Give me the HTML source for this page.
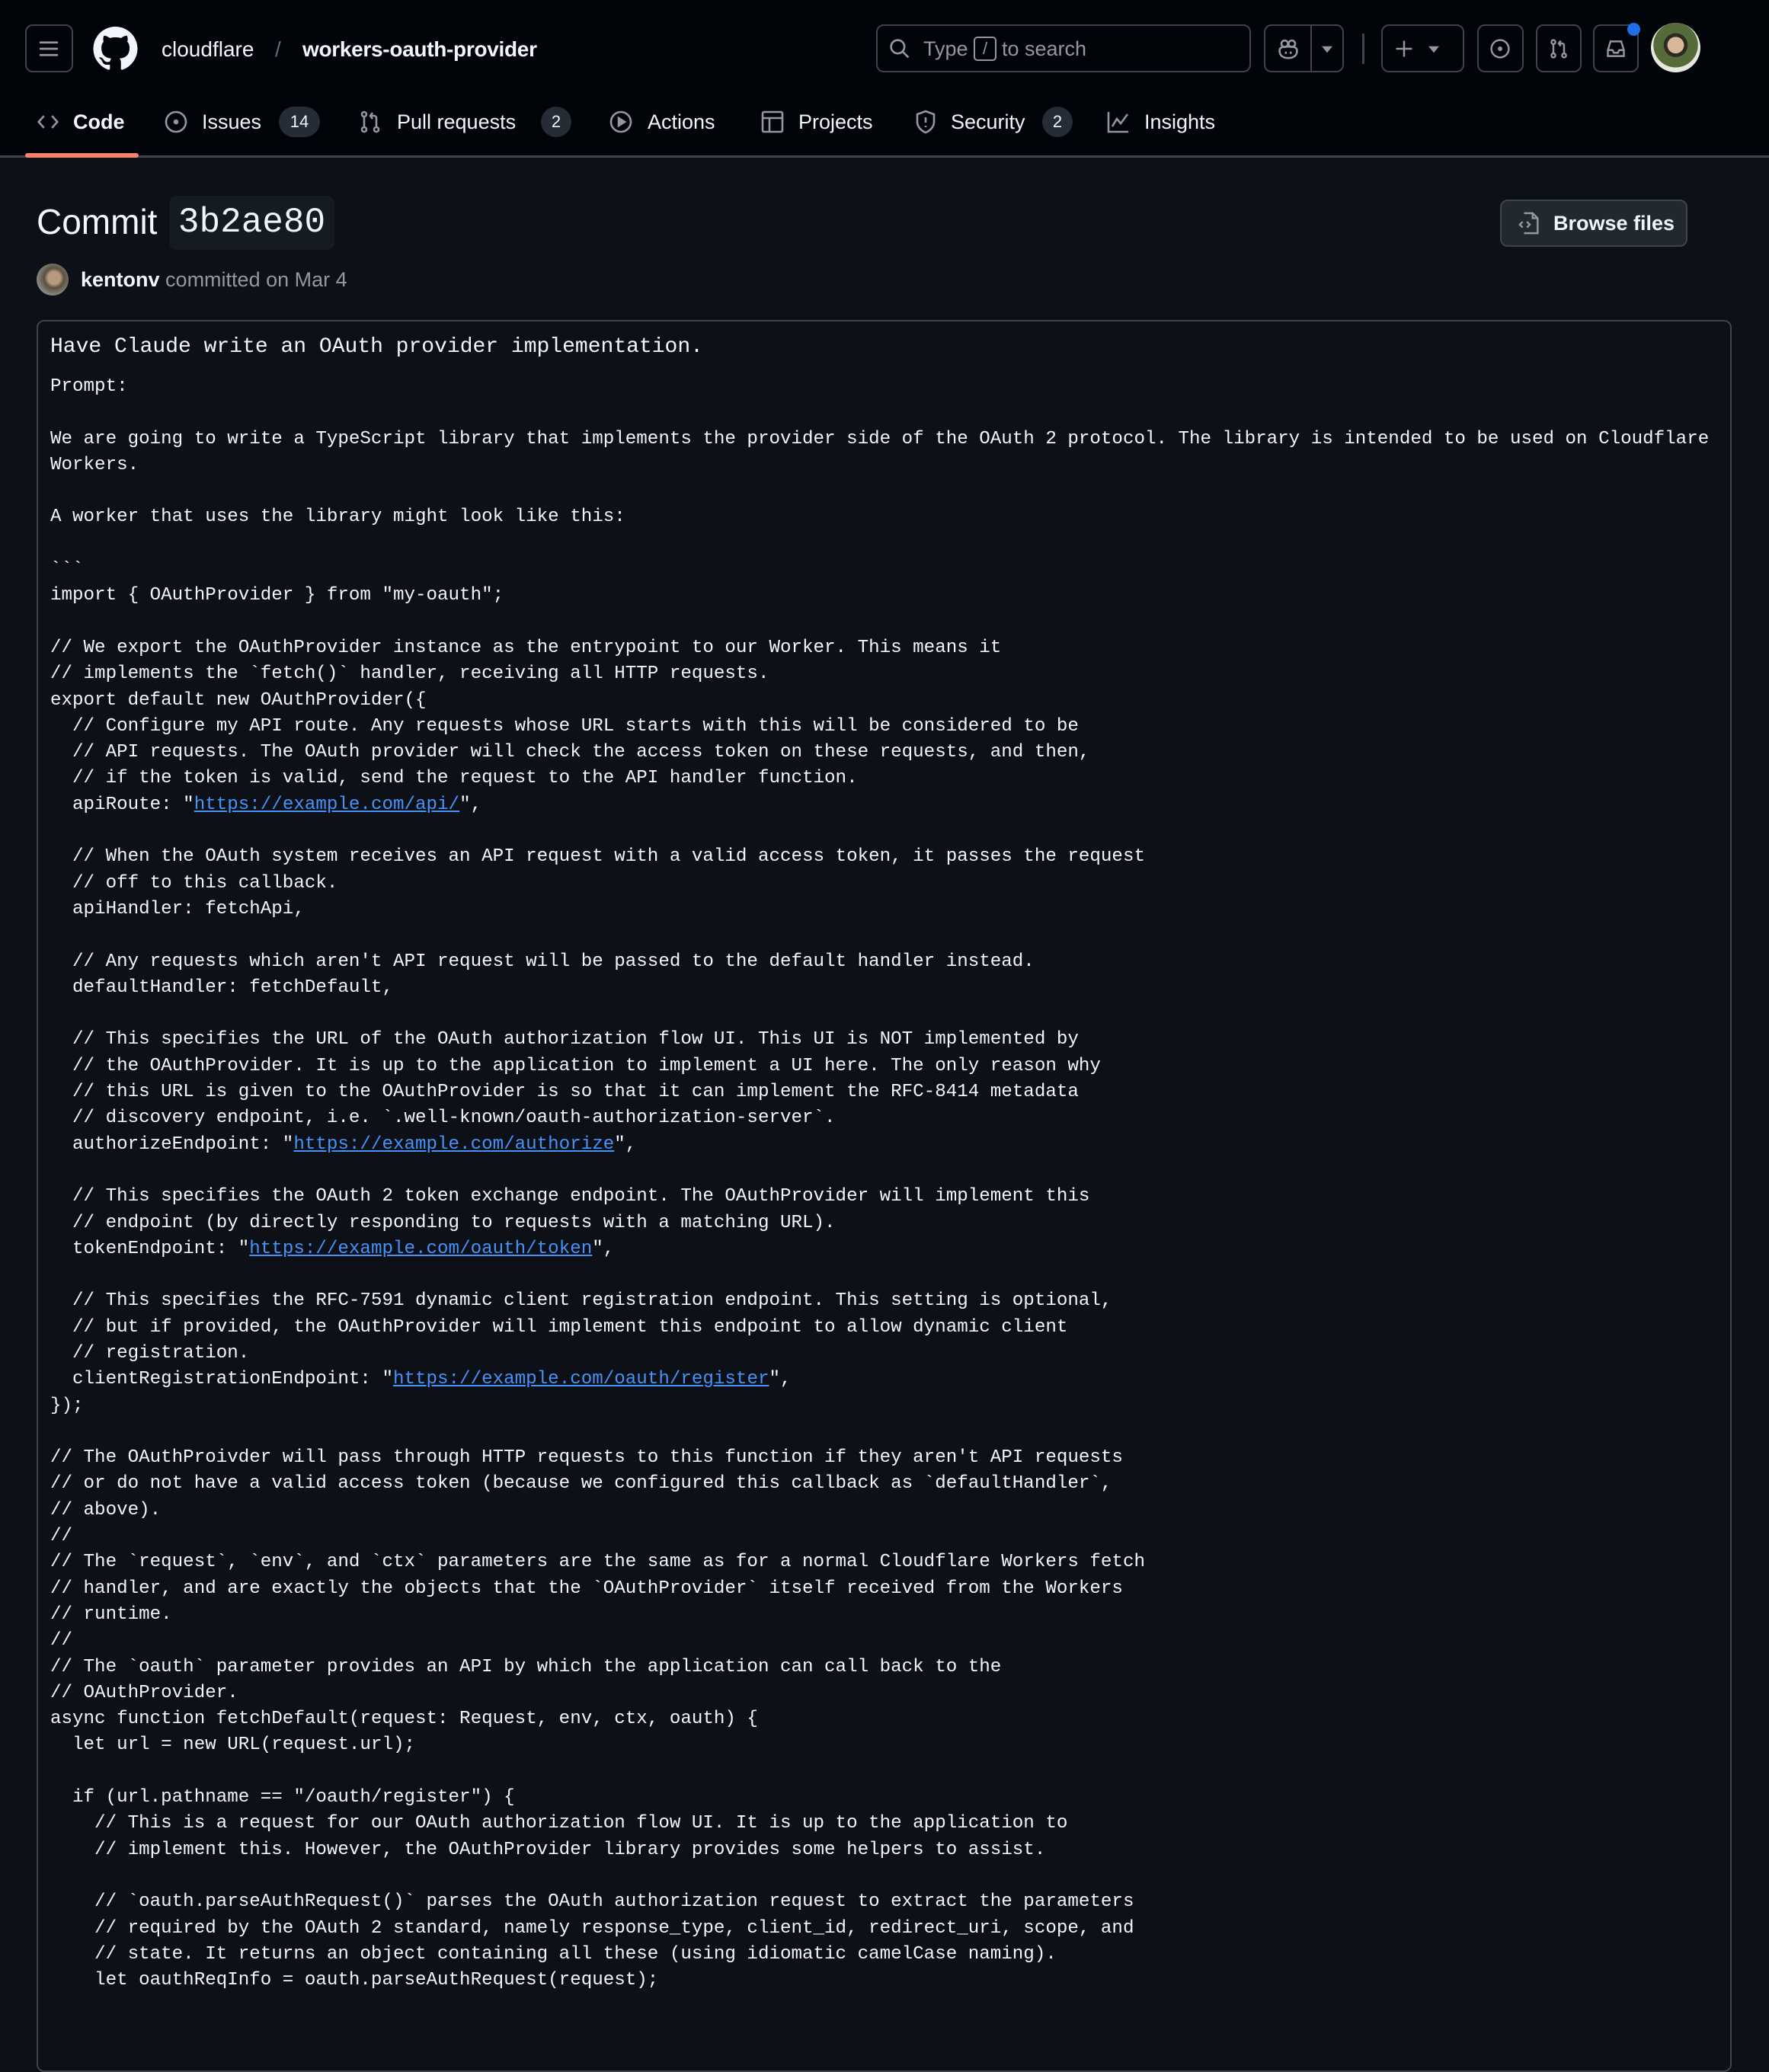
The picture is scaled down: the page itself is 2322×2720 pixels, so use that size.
<!DOCTYPE html>
<html><head><meta charset="utf-8"><style>
*{box-sizing:border-box;margin:0;padding:0}
body{width:2322px;height:2656px;overflow:hidden;background:#0d1117;color:#f0f6fc;font-family:"Liberation Sans",sans-serif;position:relative}
.hdr{position:absolute;left:0;top:0;width:2322px;height:207px;background:#010409;border-bottom:3px solid #3d444d}
.a{position:absolute}
.btn{position:absolute;top:32px;height:63px;border:2px solid #3d444d;border-radius:10px}
.t{position:absolute;font-size:27px;line-height:40px;top:140px;color:#f0f6fc}
.cnt{position:absolute;top:140px;height:40px;border-radius:20px;background:#262c36;color:#f0f6fc;font-size:22px;line-height:40px;text-align:center}
svg.i{position:absolute}
pre{font-family:"Liberation Mono",monospace;font-size:24.2px;line-height:34.3px;color:#f0f6fc;white-space:pre}
a{color:#4493f8;text-decoration:underline}
</style></head><body>
<div class="hdr">
 <div class="btn" style="left:33px;width:63px"></div>
 <svg class="i" style="left:50px;top:50px" width="28" height="28" viewBox="0 0 16 16" fill="#9198a1"><rect x="1" y="2.5" width="14" height="1.6" rx=".8"/><rect x="1" y="7.2" width="14" height="1.6" rx=".8"/><rect x="1" y="11.9" width="14" height="1.6" rx=".8"/></svg>
 <svg class="i" style="left:122px;top:35px" width="59" height="58" viewBox="0 0 16 16" fill="#f0f6fc"><path d="M8 0C3.58 0 0 3.58 0 8c0 3.540 2.29 6.53 5.47 7.59.4.07.55-.17.55-.38 0-.19-.01-.82-.01-1.49-2.01.37-2.53-.49-2.690-.94-.09-.23-.48-.94-.82-1.13-.28-.15-.68-.52-.01-.53.63-.01 1.08.58 1.230.82.72 1.21 1.870.87 2.330.66.07-.52.28-.87.51-1.07-1.78-.2-3.64-.89-3.64-3.95 0-.87.31-1.59.82-2.15-.08-.2-.36-1.02.08-2.12 0 0 .67-.21 2.2.82.64-.18 1.32-.27 2-.27.68 0 1.36.09 2 .27 1.53-1.04 2.2-.82 2.2-.82.44 1.1.16 1.92.08 2.12.51.56.82 1.27.82 2.15 0 3.07-1.87 3.75-3.65 3.95.29.25.54.73.54 1.48 0 1.07-.01 1.93-.01 2.2 0 .21.15.46.55.38A8.013 8.013 0 0016 8c0-4.42-3.58-8-8-8z"/></svg>
 <div class="a" style="left:212px;top:45px;font-size:28px;line-height:40px">cloudflare</div>
 <div class="a" style="left:361px;top:45px;font-size:28px;line-height:40px;color:#656c76">/</div>
 <div class="a" style="left:397px;top:45px;font-size:28px;line-height:40px;font-weight:bold;letter-spacing:-.3px">workers-oauth-provider</div>

 <div class="btn" style="left:1150px;width:492px"></div>
 <svg class="i" style="left:1167px;top:50px" width="28" height="28" viewBox="0 0 16 16" fill="none" stroke="#9198a1" stroke-width="1.5"><circle cx="6.5" cy="6.5" r="5"/><path d="M10.2 10.2 14.5 14.5"/></svg>
 <div class="a" style="left:1212px;top:44px;font-size:27px;line-height:40px;color:#9198a1">Type</div>
 <div class="a" style="left:1278px;top:48px;width:30px;height:32px;border:2px solid #9198a1;border-radius:5px;font-size:22px;line-height:28px;text-align:center;color:#9198a1">/</div>
 <div class="a" style="left:1315px;top:44px;font-size:27px;line-height:40px;color:#9198a1">to search</div>

 <div class="btn" style="left:1659px;width:105px"></div>
 <div class="a" style="left:1720px;top:32px;width:2px;height:63px;background:#3d444d"></div>
 <svg class="i" style="left:1676px;top:49px" width="30" height="30" viewBox="0 0 16 16" fill="none" stroke="#9198a1" stroke-width="1.4"><circle cx="5.5" cy="4.5" r="2.3"/><circle cx="10.5" cy="4.5" r="2.3"/><path d="M2 8.5c-.5 3 1 6 6 6s6.5-3 6-6c-.5-1.5-2-2-6-2s-5.5.5-6 2z"/><path d="M6.3 10v1.6M9.7 10v1.6"/></svg>
 <svg class="i" style="left:1735px;top:60px" width="14" height="10" viewBox="0 0 10 6" fill="#9198a1"><path d="M0 0h10L5 6z"/></svg>
 <div class="a" style="left:1788px;top:44px;width:3px;height:40px;background:#3d444d"></div>
 <div class="btn" style="left:1813px;width:109px"></div>
 <svg class="i" style="left:1831px;top:52px" width="24" height="24" viewBox="0 0 16 16" stroke="#9198a1" stroke-width="1.6"><path d="M8 1v14M1 8h14"/></svg>
 <svg class="i" style="left:1875px;top:60px" width="14" height="10" viewBox="0 0 10 6" fill="#9198a1"><path d="M0 0h10L5 6z"/></svg>
 <div class="btn" style="left:1939px;width:61px"></div>
 <svg class="i" style="left:1955px;top:50px" width="28" height="28" viewBox="0 0 16 16" fill="none" stroke="#9198a1" stroke-width="1.4"><circle cx="8" cy="8" r="6.5"/><circle cx="8" cy="8" r="1" fill="#9198a1"/></svg>
 <div class="btn" style="left:2016px;width:60px"></div>
 <svg class="i" style="left:2032px;top:50px" width="28" height="28" viewBox="0 0 16 16" fill="none" stroke="#9198a1" stroke-width="1.4"><circle cx="4" cy="3" r="1.5"/><circle cx="4" cy="13" r="1.5"/><circle cx="12" cy="13" r="1.5"/><path d="M4 4.5v7M12 11.5V5.5a1.5 1.5 0 00-1.5-1.5H8M9.5 2 8 4l1.5 2"/></svg>
 <div class="btn" style="left:2091px;width:60px"></div>
 <svg class="i" style="left:2107px;top:50px" width="28" height="28" viewBox="0 0 16 16" fill="none" stroke="#9198a1" stroke-width="1.4"><path d="M2 9l2-6.5h8L14 9v4.5H2zM2 9h3.5l1 2h3l1-2H14"/></svg>
 <div class="a" style="left:2136px;top:30px;width:17px;height:17px;border-radius:50%;background:#1f6feb"></div>
 <div class="a" style="left:2167px;top:30px;width:65px;height:65px;border-radius:50%;background:radial-gradient(circle at 50% 45%,#d8b89a 0 22%,#2b2b22 23% 32%,#556b3a 33% 60%,#e8e8e0 61%)"></div>

 <svg class="i" style="left:48px;top:146px" width="30" height="28" viewBox="0 0 16 16" fill="none" stroke="#9198a1" stroke-width="1.5"><path d="M5 3.5 1 8l4 4.5M11 3.5 15 8l-4 4.5"/></svg>
 <div class="t" style="left:96px;font-weight:bold">Code</div>
 <div class="a" style="left:33px;top:201px;width:149px;height:6px;border-radius:3px;background:#f78166"></div>
 <svg class="i" style="left:215px;top:144px" width="32" height="32" viewBox="0 0 16 16" fill="none" stroke="#9198a1" stroke-width="1.3"><circle cx="8" cy="8" r="6.5"/><circle cx="8" cy="8" r="1" fill="#9198a1"/></svg>
 <div class="t" style="left:265px">Issues</div>
 <div class="cnt" style="left:366px;width:54px">14</div>
 <svg class="i" style="left:470px;top:144px" width="32" height="32" viewBox="0 0 16 16" fill="none" stroke="#9198a1" stroke-width="1.3"><circle cx="4" cy="3" r="1.5"/><circle cx="4" cy="13" r="1.5"/><circle cx="12" cy="13" r="1.5"/><path d="M4 4.5v7M12 11.5V5.5a1.5 1.5 0 00-1.5-1.5H8M9.5 2 8 4l1.5 2"/></svg>
 <div class="t" style="left:521px">Pull requests</div>
 <div class="cnt" style="left:710px;width:40px">2</div>
 <svg class="i" style="left:799px;top:144px" width="32" height="32" viewBox="0 0 16 16" fill="none" stroke="#9198a1" stroke-width="1.3"><circle cx="8" cy="8" r="6.5"/><path d="M6.5 5.5v5l4-2.5z" fill="#9198a1"/></svg>
 <div class="t" style="left:850px">Actions</div>
 <svg class="i" style="left:998px;top:144px" width="32" height="32" viewBox="0 0 16 16" fill="none" stroke="#9198a1" stroke-width="1.3"><rect x="1.5" y="1.5" width="13" height="13" rx="1"/><path d="M1.5 5.5h13M6 5.5v9"/></svg>
 <div class="t" style="left:1048px">Projects</div>
 <svg class="i" style="left:1199px;top:144px" width="32" height="32" viewBox="0 0 16 16" fill="none" stroke="#9198a1" stroke-width="1.3"><path d="M8 1 2.5 3v5c0 3.5 3 6 5.5 7 2.5-1 5.5-3.5 5.5-7V3z"/><path d="M8 5v3.5M8 10.5v1"/></svg>
 <div class="t" style="left:1248px">Security</div>
 <div class="cnt" style="left:1368px;width:40px">2</div>
 <svg class="i" style="left:1452px;top:144px" width="32" height="32" viewBox="0 0 16 16" fill="none" stroke="#9198a1" stroke-width="1.3"><path d="M1.5 1.5v13h13M4 11l3-5 2.5 3L14 3"/></svg>
 <div class="t" style="left:1502px">Insights</div>
</div>

<div class="a" style="left:48px;top:266px;font-size:46px;line-height:50px">Commit</div>
<div class="a" style="left:222px;top:257px;width:217px;height:71px;border-radius:10px;background:#151b23;font-family:'Liberation Mono',monospace;font-size:46px;line-height:71px;text-align:center">3b2ae80</div>
<div class="a" style="left:1969px;top:262px;width:246px;height:62px;border:2px solid #3d444d;border-radius:10px;background:#212830"></div>
<svg class="i" style="left:1993px;top:278px" width="30" height="30" viewBox="0 0 16 16" fill="none" stroke="#9198a1" stroke-width="1.3"><path d="M4 1h6l3.5 3.5V15H4M10 1v3.5h3.5M3 7 1 9l2 2M6 7l2 2-2 2"/></svg>
<div class="a" style="left:2039px;top:273px;font-size:27px;line-height:40px;font-weight:bold">Browse files</div>
<div class="a" style="left:48px;top:346px;width:42px;height:42px;border-radius:50%;background:radial-gradient(circle at 55% 45%,#b89a80 0 25%,#5a5040 40%,#8a8a85 70%)"></div>
<div class="a" style="left:106px;top:349px;font-size:27px;line-height:36px"><b>kentonv</b> <span style="color:#9198a1">committed on Mar 4</span></div>

<div class="a" style="left:48px;top:420px;width:2225px;height:2300px;border:2px solid #3d444d;border-radius:10px"></div>
<div class="a" style="left:66px;top:436px;font-family:'Liberation Mono',monospace;font-size:28px;line-height:40px;color:#f0f6fc">Have Claude write an OAuth provider implementation.</div>
<pre class="a" style="left:66px;top:491px">Prompt:

We are going to write a TypeScript library that implements the provider side of the OAuth 2 protocol. The library is intended to be used on Cloudflare
Workers.

A worker that uses the library might look like this:

&#96;&#96;&#96;
import { OAuthProvider } from "my-oauth";

// We export the OAuthProvider instance as the entrypoint to our Worker. This means it
// implements the `fetch()` handler, receiving all HTTP requests.
export default new OAuthProvider({
  // Configure my API route. Any requests whose URL starts with this will be considered to be
  // API requests. The OAuth provider will check the access token on these requests, and then,
  // if the token is valid, send the request to the API handler function.
  apiRoute: "<a>https://example.com/api/</a>",

  // When the OAuth system receives an API request with a valid access token, it passes the request
  // off to this callback.
  apiHandler: fetchApi,

  // Any requests which aren't API request will be passed to the default handler instead.
  defaultHandler: fetchDefault,

  // This specifies the URL of the OAuth authorization flow UI. This UI is NOT implemented by
  // the OAuthProvider. It is up to the application to implement a UI here. The only reason why
  // this URL is given to the OAuthProvider is so that it can implement the RFC-8414 metadata
  // discovery endpoint, i.e. `.well-known/oauth-authorization-server`.
  authorizeEndpoint: "<a>https://example.com/authorize</a>",

  // This specifies the OAuth 2 token exchange endpoint. The OAuthProvider will implement this
  // endpoint (by directly responding to requests with a matching URL).
  tokenEndpoint: "<a>https://example.com/oauth/token</a>",

  // This specifies the RFC-7591 dynamic client registration endpoint. This setting is optional,
  // but if provided, the OAuthProvider will implement this endpoint to allow dynamic client
  // registration.
  clientRegistrationEndpoint: "<a>https://example.com/oauth/register</a>",
});

// The OAuthProivder will pass through HTTP requests to this function if they aren't API requests
// or do not have a valid access token (because we configured this callback as `defaultHandler`,
// above).
//
// The `request`, `env`, and `ctx` parameters are the same as for a normal Cloudflare Workers fetch
// handler, and are exactly the objects that the `OAuthProvider` itself received from the Workers
// runtime.
//
// The `oauth` parameter provides an API by which the application can call back to the
// OAuthProvider.
async function fetchDefault(request: Request, env, ctx, oauth) {
  let url = new URL(request.url);

  if (url.pathname == "/oauth/register") {
    // This is a request for our OAuth authorization flow UI. It is up to the application to
    // implement this. However, the OAuthProvider library provides some helpers to assist.

    // `oauth.parseAuthRequest()` parses the OAuth authorization request to extract the parameters
    // required by the OAuth 2 standard, namely response_type, client_id, redirect_uri, scope, and
    // state. It returns an object containing all these (using idiomatic camelCase naming).
    let oauthReqInfo = oauth.parseAuthRequest(request);
</pre>
</body></html>
